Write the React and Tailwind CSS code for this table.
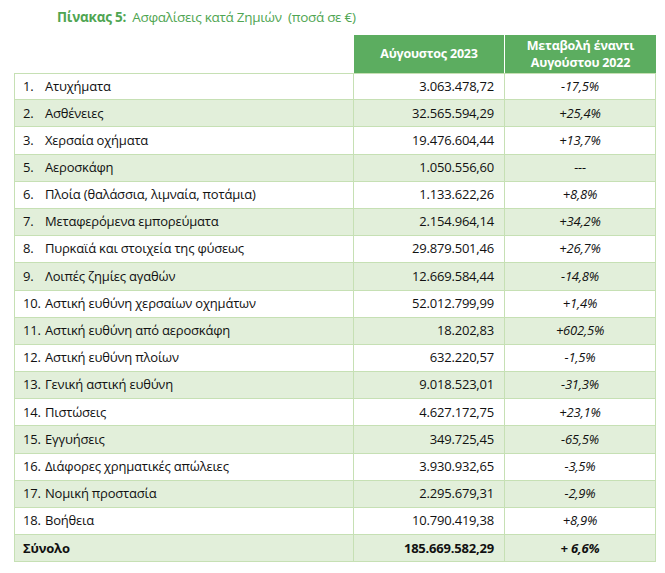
import React from 'react';

const rows = [
  ['1.', 'Ατυχήματα', '3.063.478,72', '-17,5%'],
  ['2.', 'Ασθένειες', '32.565.594,29', '+25,4%'],
  ['3.', 'Χερσαία οχήματα', '19.476.604,44', '+13,7%'],
  ['5.', 'Αεροσκάφη', '1.050.556,60', '---'],
  ['6.', 'Πλοία (θαλάσσια, λιμναία, ποτάμια)', '1.133.622,26', '+8,8%'],
  ['7.', 'Μεταφερόμενα εμπορεύματα', '2.154.964,14', '+34,2%'],
  ['8.', 'Πυρκαϊά και στοιχεία της φύσεως', '29.879.501,46', '+26,7%'],
  ['9.', 'Λοιπές ζημίες αγαθών', '12.669.584,44', '-14,8%'],
  ['10.', 'Αστική ευθύνη χερσαίων οχημάτων', '52.012.799,99', '+1,4%'],
  ['11.', 'Αστική ευθύνη από αεροσκάφη', '18.202,83', '+602,5%'],
  ['12.', 'Αστική ευθύνη πλοίων', '632.220,57', '-1,5%'],
  ['13.', 'Γενική αστική ευθύνη', '9.018.523,01', '-31,3%'],
  ['14.', 'Πιστώσεις', '4.627.172,75', '+23,1%'],
  ['15.', 'Εγγυήσεις', '349.725,45', '-65,5%'],
  ['16.', 'Διάφορες χρηματικές απώλειες', '3.930.932,65', '-3,5%'],
  ['17.', 'Νομική προστασία', '2.295.679,31', '-2,9%'],
  ['18.', 'Βοήθεια', '10.790.419,38', '+8,9%'],
];

const font = { fontFamily: '"Open Sans", "Noto Sans", sans-serif' };

export default function App() {
  return (
    <div className="w-[665px] h-[573px] bg-white text-[#111]" style={font}>
      {/* Title */}
      <div className="pt-[7px] pl-[57px] text-[13.5px] leading-[20px] text-[#4fa552]">
        <span className="font-bold tracking-[-0.2px]">Πίνακας 5:</span>
        <span className="ml-[6px] tracking-[-0.3px]">Ασφαλίσεις κατά Ζημιών&nbsp; (ποσά σε €)</span>
      </div>

      {/* Table */}
      <div className="mt-[8px] ml-[14px] grid grid-cols-[340px_151px_151px] text-[13px] tracking-[-0.2px]">
        {/* Header */}
        <div className="h-[38px]" />
        <div className="h-[38px] bg-[#5cad60] text-white font-bold text-[12.5px] flex items-center justify-center border-r border-white">
          Αύγουστος 2023
        </div>
        <div className="h-[38px] bg-[#5cad60] text-white font-bold text-[12.5px] flex flex-col items-center justify-center leading-[17px]">
          <span>Μεταβολή έναντι</span>
          <span>Αυγούστου 2022</span>
        </div>

        {/* Body */}
        {rows.map(([n, label, amount, change], i) => {
          const bg = i % 2 === 1 ? 'bg-[#e2efda]' : 'bg-white';
          return (
            <React.Fragment key={n}>
              <div className={`${bg} h-[27.2px] flex items-center pl-[8px] border-l border-b border-r border-[#c6e0b4] ${i === 0 ? 'border-t' : ''}`}>
                <span className="w-[22px] shrink-0">{n}</span>
                <span>{label}</span>
              </div>
              <div className={`${bg} h-[27.2px] flex items-center justify-end pr-[10px] border-b border-r border-[#c6e0b4] ${i === 0 ? 'border-t' : ''}`}>
                {amount}
              </div>
              <div className={`${bg} h-[27.2px] flex items-center justify-center italic border-b border-r border-[#c6e0b4] ${i === 0 ? 'border-t' : ''}`}>
                {change}
              </div>
            </React.Fragment>
          );
        })}

        {/* Total */}
        <div className="bg-[#e2efda] h-[27.2px] flex items-center pl-[8px] font-bold border-l border-b border-r border-[#c6e0b4]">
          Σύνολο
        </div>
        <div className="bg-[#e2efda] h-[27.2px] flex items-center justify-end pr-[10px] font-bold border-b border-r border-[#c6e0b4]">
          185.669.582,29
        </div>
        <div className="bg-[#e2efda] h-[27.2px] flex items-center justify-center font-bold italic border-b border-r border-[#c6e0b4]">
          + 6,6%
        </div>
      </div>
    </div>
  );
}
